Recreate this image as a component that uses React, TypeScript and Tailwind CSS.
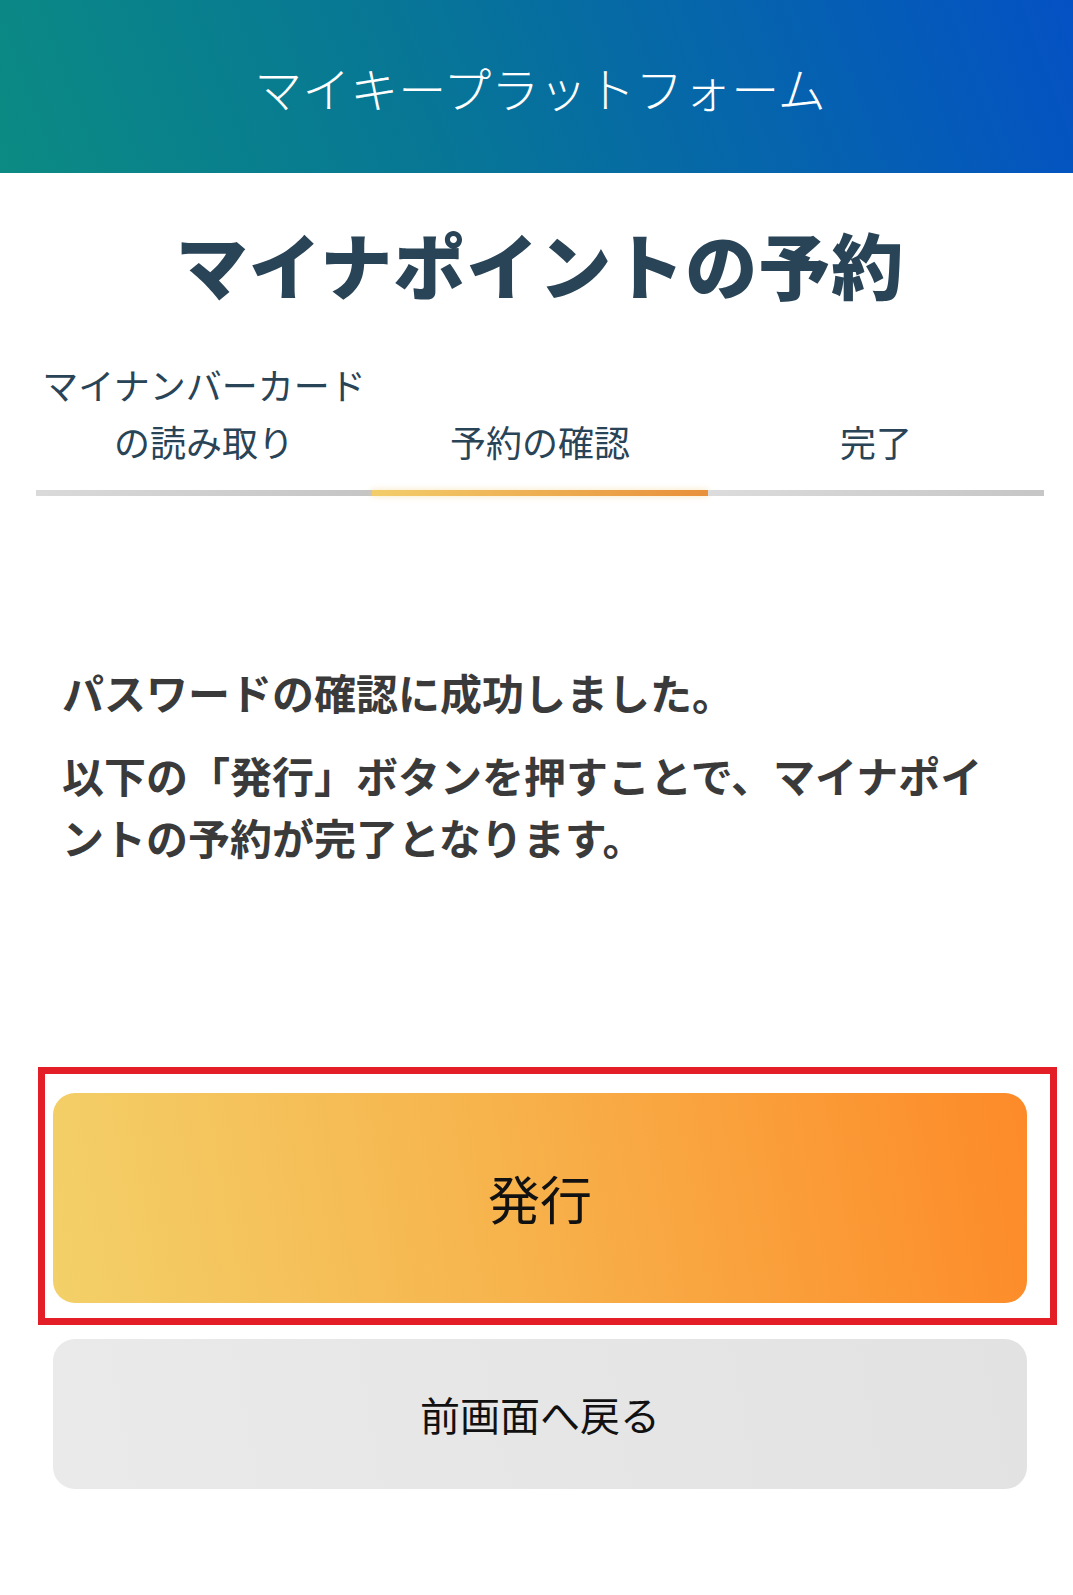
import React from 'react';

const font = { fontFamily: '"Noto Sans CJK JP", "Noto Sans", sans-serif' };

const steps = [
  { label: ['マイナンバーカード', 'の読み取り'], state: 'done' },
  { label: ['予約の確認'], state: 'current' },
  { label: ['完了'], state: 'todo' },
];

const StepBar: React.FC = () => (
  <div className="mt-[57px]">
    <div className="grid grid-cols-3 items-end text-center text-[36px] leading-[57px] text-[#2a4457]">
      {steps.map((s, i) => (
        <div key={i}>
          {s.label.map((l, j) => (
            <div key={j} className="whitespace-nowrap">{l}</div>
          ))}
        </div>
      ))}
    </div>
    <div className="mt-[20px] grid grid-cols-3">
      <div className="h-[6px] bg-[linear-gradient(90deg,#dadada,#c5c5c5)]" />
      <div className="h-[6px] bg-[linear-gradient(90deg,#f3cd6b,#e8903a)] shadow-[0_0_6px_rgba(245,200,110,0.45)]" />
      <div className="h-[6px] bg-[linear-gradient(90deg,#dcdcdc,#c6c6c6)]" />
    </div>
  </div>
);

export default function App() {
  return (
    <div className="min-h-[1595px] bg-white" style={font}>
      <header className="flex h-[173px] items-center justify-center bg-[linear-gradient(70deg,#0b8b83_0%,#077696_40%,#0451c4_100%)] pl-[7px] pt-[1px]">
        <h1 className="text-[48px] font-light leading-none text-white">マイキープラットフォーム</h1>
      </header>

      <main className="pl-[36px] pr-[29px]">
        <h2 className="mt-[54px] text-center text-[72px] font-black leading-none tracking-[1px] text-[#2a4457]">
          マイナポイントの予約
        </h2>

        <StepBar />

        <section className="mt-[165px] px-[26px] text-[42px] font-bold leading-[62px] text-[#3a3a3a]">
          <p>パスワードの確認に成功しました。</p>
          <p className="mt-[21px]">以下の「発行」ボタンを押すことで、マイナポイントの予約が完了となります。</p>
        </section>

        <div className="mx-[17px] mt-[225px] flex flex-col gap-[36px]">
          <div className="relative">
            <button className="flex h-[210px] w-full items-center justify-center rounded-[22px] bg-[linear-gradient(80deg,#f3d069_0%,#f7b44d_45%,#fd8a28_100%)] text-[52px] text-[#111]">
              発行
            </button>
            <div className="pointer-events-none absolute -top-[26px] -bottom-[22px] -left-[15px] -right-[30px] border-[7px] border-[#e41e26]" />
          </div>
          <button className="flex h-[150px] w-full items-center justify-center rounded-[22px] bg-[linear-gradient(80deg,#eaeaea,#e2e2e2)] text-[40px] text-[#111]">
            前画面へ戻る
          </button>
        </div>
      </main>
    </div>
  );
}
